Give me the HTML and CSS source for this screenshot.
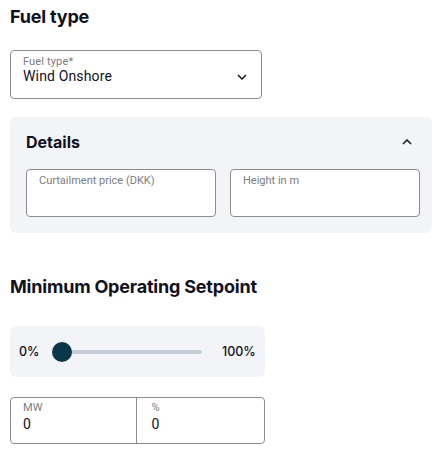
FILE: index.html
```html
<!DOCTYPE html>
<html>
<head>
<meta charset="utf-8">
<title>Fuel type</title>
<link rel="stylesheet" href="styles.css">
</head>
<body>
	<div class="page">
		<h2 class="section-title">Fuel type</h2>
		<div class="field select-field">
			<div class="field-body">
				<span class="field-label">Fuel type*</span>
				<span class="field-value">Wind Onshore</span>
			</div>
			<svg class="chevron" width="10" height="6" viewBox="0 0 10 6"><path d="M1 1l4 4 4-4" fill="none" stroke="#111827" stroke-width="1.5"/></svg>
		</div>

		<div class="panel details">
			<div class="details-head">
				<h3>Details</h3>
				<svg class="chevron" width="10" height="6" viewBox="0 0 10 6"><path d="M1 5l4-4 4 4" fill="none" stroke="#111827" stroke-width="1.5"/></svg>
			</div>
			<div class="details-fields">
				<div class="field input-field"><span class="input-label">Curtailment price (DKK)</span></div>
				<div class="field input-field"><span class="input-label">Height in m</span></div>
			</div>
		</div>

		<h2 class="section-title setpoint-title">Minimum Operating Setpoint</h2>
		<div class="panel slider-panel">
			<span class="slider-text slider-min">0%</span>
			<div class="slider">
				<div class="slider-track"></div>
				<div class="slider-thumb"></div>
			</div>
			<span class="slider-text">100%</span>
		</div>

		<div class="field split-field">
			<div class="split-cell">
				<span class="field-label">MW</span>
				<span class="field-value">0</span>
			</div>
			<div class="split-cell">
				<span class="field-label">%</span>
				<span class="field-value">0</span>
			</div>
		</div>
	</div>
</body>
</html>
```

FILE: styles.css
```css
*{
	margin: 0;
	padding: 0;
	box-sizing: border-box;
}
body{
	font-family: Inter, "Noto Sans", sans-serif;
	color: #11111f;
	background: #fff;
}
.page{
	padding: 5px 10px 0;
}
.section-title{
	font-size: 18px;
	line-height: 24px;
	font-weight: 700;
	letter-spacing: -0.2px;
}
.field{
	border: 1px solid #8d8d8d;
	border-radius: 4px;
	background: #fff;
	font-family: Roboto, "Liberation Sans", sans-serif;
}
.field-label{
	display: block;
	font-size: 11px;
	line-height: 13px;
	letter-spacing: 0.15px;
	color: #7c7c84;
}
.field-value{
	display: block;
	font-size: 14px;
	line-height: 17px;
	letter-spacing: 0.15px;
	color: #11111f;
}
.select-field{
	margin-top: 21px;
	width: 252px;
	height: 49px;
	display: flex;
	align-items: flex-start;
	justify-content: space-between;
	padding: 4px 14px 0 12px;
}
.select-field .chevron{
	margin-top: 19px;
}
.panel{
	background: #f3f4f8;
	border-radius: 6px;
}
.details{
	margin-top: 18px;
	padding: 14px 12px 16px 16px;
	width: 422px;
}
.details-head{
	display: flex;
	align-items: center;
	justify-content: space-between;
	height: 22px;
	padding-right: 8px;
}
.details-head h3{
	font-size: 16px;
	font-weight: 700;
	line-height: 22px;
}
.details-fields{
	margin-top: 16px;
	display: grid;
	grid-template-columns: 190px 190px;
	gap: 14px;
}
.input-field{
	height: 48px;
	padding: 4px 12px;
}
.input-label{
	display: block;
	font-size: 11px;
	line-height: 13px;
	color: #7c7c84;
}
.setpoint-title{
	margin-top: 42px;
}
.slider-panel{
	margin-top: 27px;
	width: 255px;
	height: 51px;
	display: flex;
	align-items: center;
	padding: 0 9px;
}
.slider-text{
	font-size: 12.5px;
	font-weight: 500;
	white-space: nowrap;
}
.slider-min{
	width: 19px;
	flex: none;
}
.slider{
	position: relative;
	flex: none;
	height: 20px;
	width: 150px;
	margin: 0 20px 0 14px;
}
.slider-track{
	position: absolute;
	left: 10px;
	right: 0;
	top: 8px;
	height: 4px;
	border-radius: 2px;
	background: #c4cfd5;
}
.slider-thumb{
	position: absolute;
	left: 0;
	top: 0;
	width: 20px;
	height: 20px;
	border-radius: 50%;
	background: #0b3848;
}
.split-field{
	margin-top: 20px;
	width: 255px;
	height: 47px;
	display: flex;
}
.split-cell{
	flex: 1;
	padding: 3px 12px;
}
.split-cell .field-value{
	margin-top: 2px;
}
.split-cell + .split-cell{
	border-left: 1px solid #8d8d8d;
	padding-left: 15px;
}
```
